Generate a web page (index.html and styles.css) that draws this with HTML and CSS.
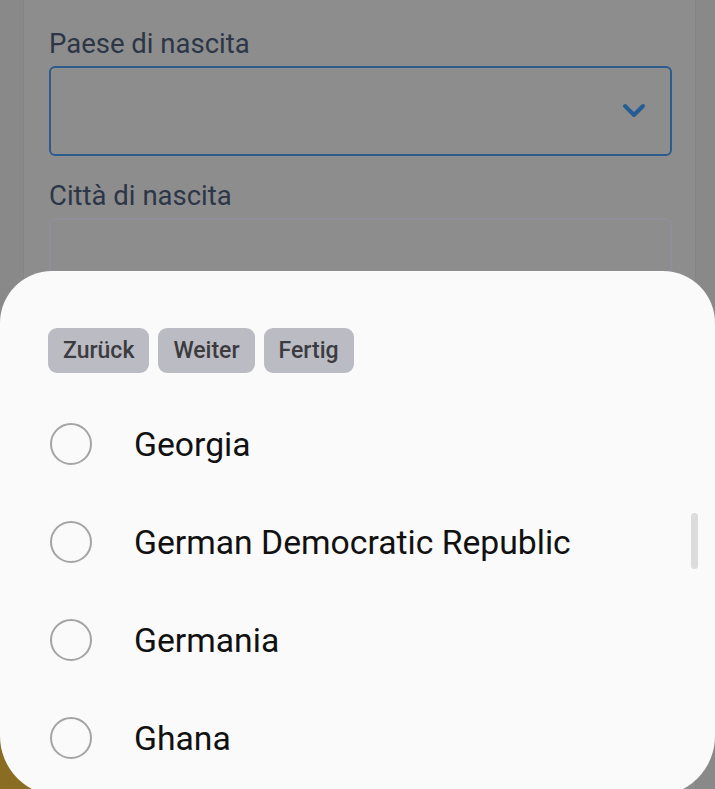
FILE: index.html
```html
<!doctype html>
<html lang="it">
<head>
	<meta charset="UTF-8">
	<title>Paese di nascita</title>
	<link rel="stylesheet" href="styles.css">
</head>
<body>
	<form class="card" action="#">
		<div class="field">
			<label class="field-label" for="paese">Paese di nascita</label>
			<div class="select-box" id="paese">
				<svg class="chevron" width="24" height="16" viewBox="0 0 24 16"><path d="M3 3 L12 12 L21 3" fill="none" stroke="#255c94" stroke-width="4" stroke-linecap="round" stroke-linejoin="round"/></svg>
			</div>
		</div>
		<div class="field">
			<label class="field-label" for="citta">Città di nascita</label>
			<div class="input-box" id="citta"></div>
		</div>
	</form>
	<div class="footer-btn"></div>

	<div class="sheet">
		<div class="toolbar">
			<button type="button" class="tool-btn">Zurück</button>
			<button type="button" class="tool-btn">Weiter</button>
			<button type="button" class="tool-btn">Fertig</button>
		</div>
		<ul class="options">
			<li><span class="radio"></span><span>Georgia</span></li>
			<li><span class="radio"></span><span>German Democratic Republic</span></li>
			<li><span class="radio"></span><span>Germania</span></li>
			<li><span class="radio"></span><span>Ghana</span></li>
		</ul>
		<div class="scroll-thumb"></div>
	</div>
</body>
</html>
```
FILE: styles.css
```css
* { box-sizing: border-box; }
html, body { height: 100%; }
body { margin: 0; overflow: hidden; background: #898989; font-family: Roboto, "Liberation Sans", sans-serif; }
.card { margin: 0 19px 0 23px; height: 100%; padding: 28px 23px 0 25px; background: #8d8d8d; border-left: 1px solid #848484; border-right: 1px solid #848484; }
.field-label { display: block; font-size: 27.5px; color: #2c3646; line-height: 32px; margin-bottom: 6px; }
.field { margin-bottom: 24px; }
.select-box { height: 90px; border: 2px solid #2b5c8d; border-radius: 6px; display: flex; align-items: center; justify-content: flex-end; padding-right: 24px; }
.chevron { display: block; }
.input-box { height: 90px; border: 2px solid #8f8f98; border-radius: 6px; }
.footer-btn { position: absolute; left: 0; bottom: 0; width: 120px; height: 70px; background: #8a6c22; }
.sheet { position: fixed; left: 0; right: 0; top: 271px; height: 525px; background: #fafafa; border-radius: 52px 52px 60px 60px; padding: 57px 48px 0; }
.toolbar { display: flex; gap: 9px; }
.tool-btn { height: 45px; padding: 0 15px; border: none; border-radius: 9px; background: #bbbbc3; color: #3b3b40; font-family: Roboto, "Liberation Sans", sans-serif; font-size: 23px; font-weight: 500; }
.options { list-style: none; margin: 22px 0 0; padding: 0; }
.options li { display: flex; align-items: center; height: 98px; font-size: 33.7px; color: #111; }
.radio { width: 42px; height: 42px; border: 2px solid #a4a4a4; border-radius: 50%; margin-left: 2px; margin-right: 42px; flex: none; }
.scroll-thumb { position: absolute; right: 17px; top: 242px; width: 7px; height: 56px; border-radius: 4px; background: #dcdcdc; }
```
